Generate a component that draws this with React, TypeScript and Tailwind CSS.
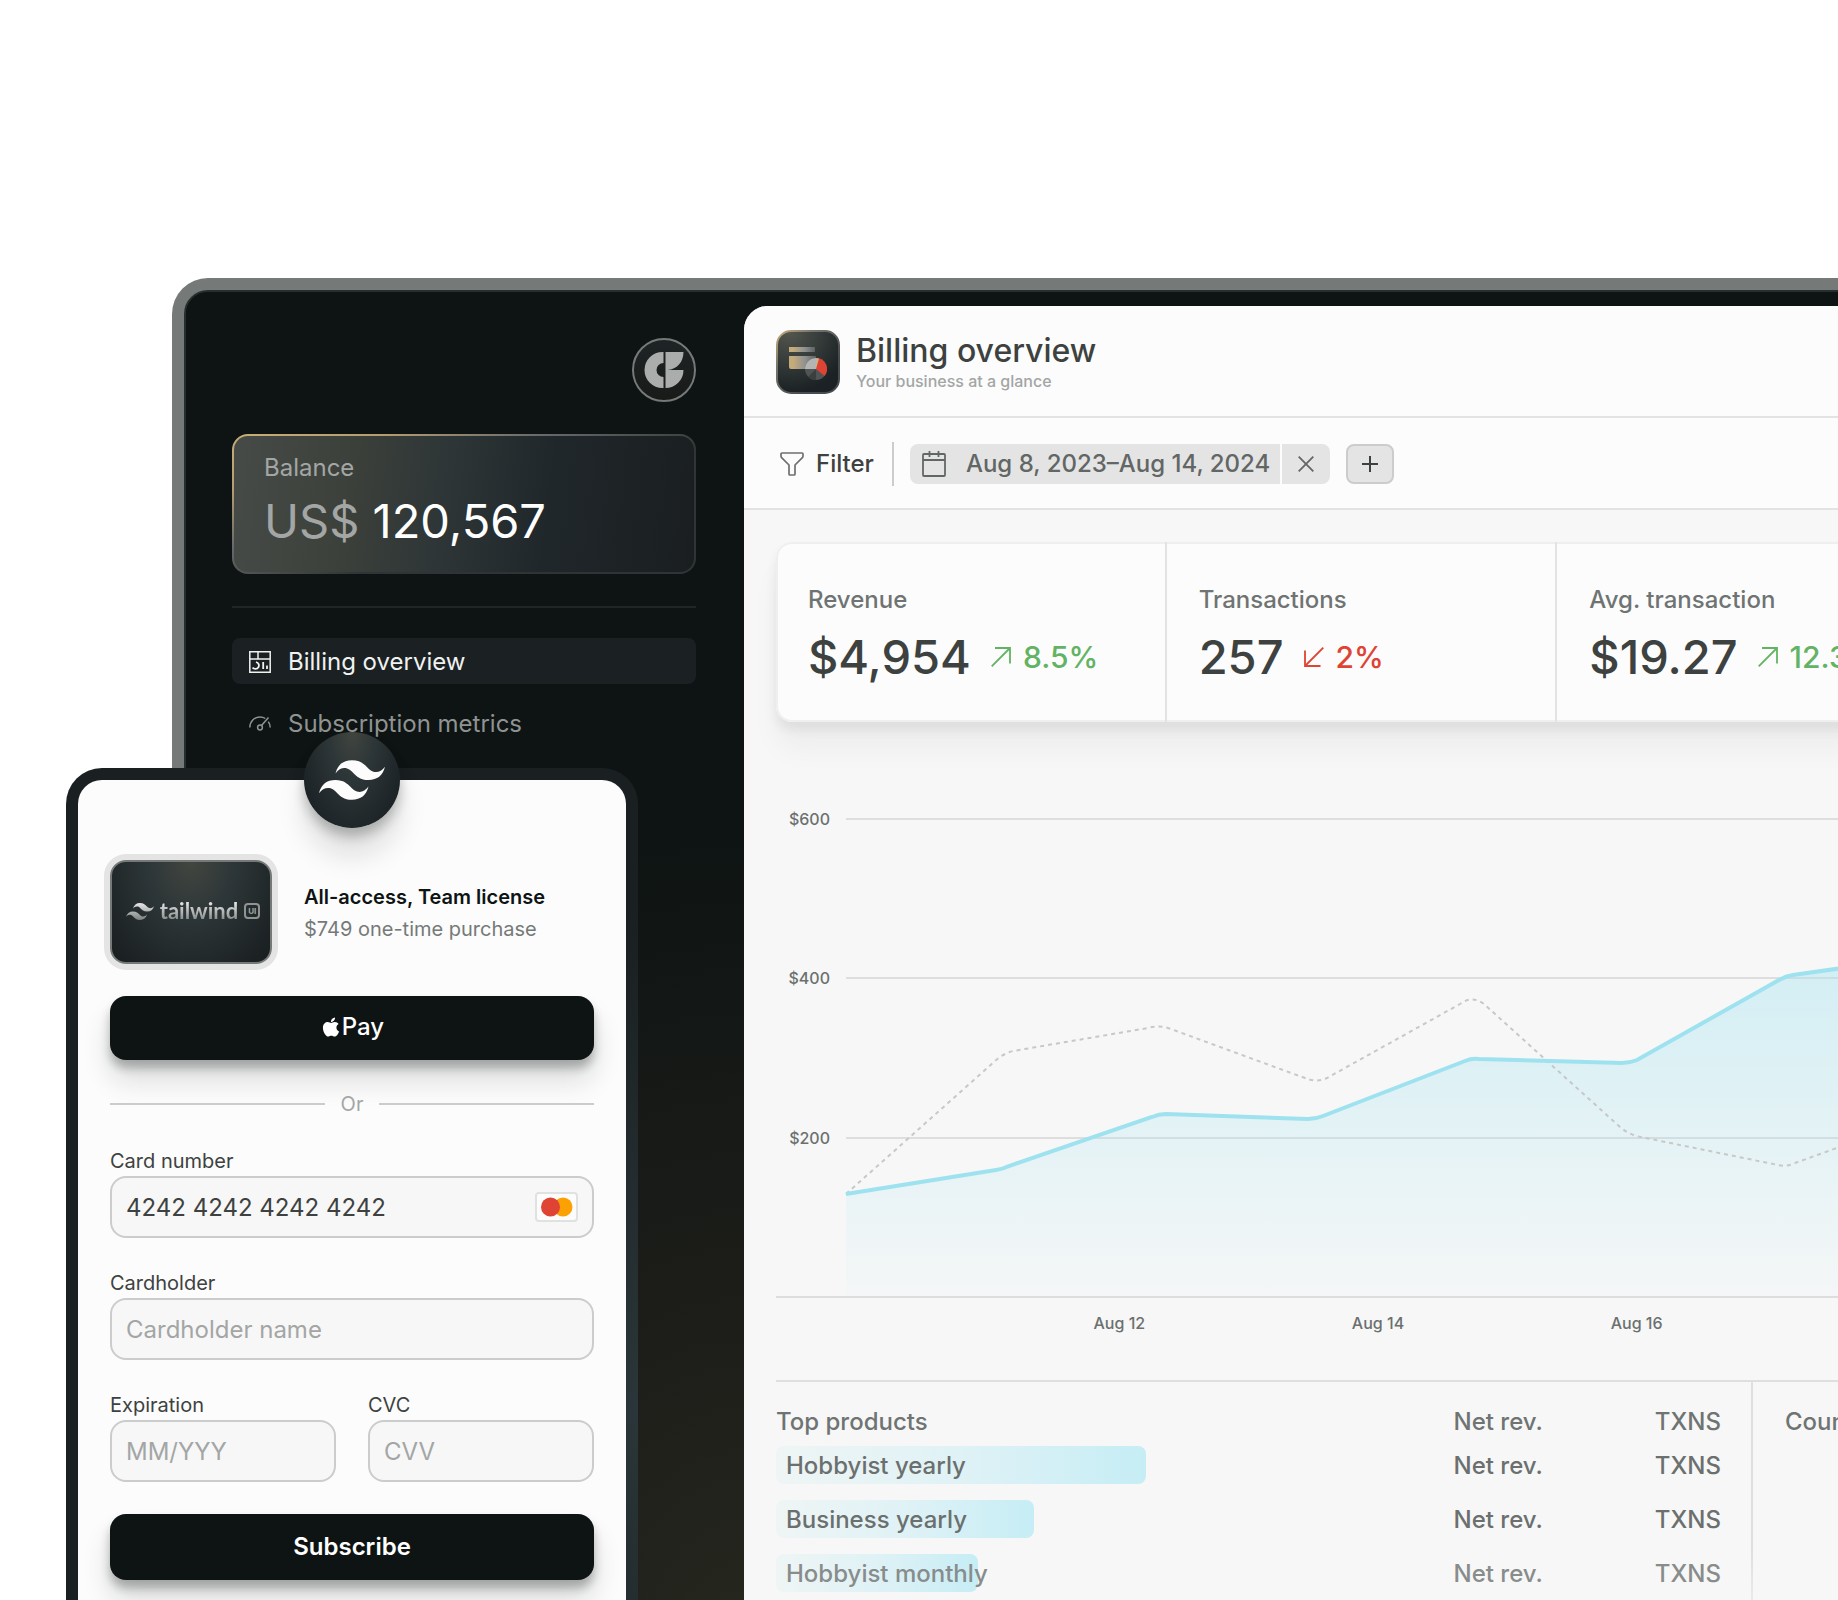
import type { ReactNode } from "react";
import { FaApple } from "react-icons/fa";

function TailwindMark({ className, fill = "#fcfcfc" }: { className: string; fill?: string }) {
  return (
    <svg viewBox="0 4.8 24 14.4" className={className} aria-hidden="true">
      <defs>
        <linearGradient id="mark-fade" x1="0" y1="0" x2="0" y2="1">
          <stop offset="0" stopColor="#e6e6e6" />
          <stop offset="1" stopColor="#7c8180" />
        </linearGradient>
      </defs>
      <path
        fill={fill}
        d="M12.001,4.8c-3.2,0-5.2,1.6-6,4.8c1.2-1.6,2.6-2.2,4.2-1.8c0.913,0.228,1.565,0.89,2.288,1.624C13.666,10.618,15.027,12,18.001,12c3.2,0,5.2-1.6,6-4.8c-1.2,1.6-2.6,2.2-4.2,1.8c-0.913-0.228-1.565-0.89-2.288-1.624C16.337,6.182,14.976,4.8,12.001,4.8z M6.001,12c-3.2,0-5.2,1.6-6,4.8c1.2-1.6,2.6-2.2,4.2-1.8c0.913,0.228,1.565,0.89,2.288,1.624c1.177,1.194,2.538,2.576,5.512,2.576c3.2,0,5.2-1.6,6-4.8c-1.2,1.6-2.6,2.2-4.2,1.8c-0.913-0.228-1.565-0.89-2.288-1.624C10.337,13.382,8.976,12,6.001,12z"
      />
    </svg>
  );
}

function BrandLogo() {
  return (
    <svg viewBox="0 0 64 64" className="size-16" aria-label="Company logo">
      <defs>
        <linearGradient id="brand-bg" x1="0" y1="0" x2="0" y2="1">
          <stop offset="0" stopColor="#1e2426" />
          <stop offset="1" stopColor="#191a18" />
        </linearGradient>
      </defs>
      <circle cx="32" cy="32" r="31" fill="url(#brand-bg)" stroke="#757a79" strokeWidth="2" />
      <g fill="#aaadac">
        <path d="M31.5 14v11a7 7 0 0 0 0 14v11h-1a18 18 0 0 1 0-36z" />
        <path d="M33.5 14h18c0 10-6.500 17.300-16 18h16a18 18 0 0 1-18 18z" />
      </g>
    </svg>
  );
}

function BillingIcon() {
  return (
    <svg viewBox="0 0 24 24" className="size-6 shrink-0" fill="none" stroke="currentColor" strokeWidth="1.5" aria-hidden="true">
      <path d="M1.800 1.800h20.400v20.400H1.800zM1.800 9h20.400M10 1.800V9" />
      <path d="M8 12c2.600.800 3.600 3.200 2.400 5.200-1.300 2.100-4.300 2.200-5.900.500M15.200 12v7M19 15.500V19" strokeWidth="1.800" />
    </svg>
  );
}

function GaugeIcon() {
  return (
    <svg viewBox="0 0 24 24" className="size-6 shrink-0" fill="none" stroke="currentColor" strokeWidth="1.500" aria-hidden="true">
      <path d="M1.800 15.500C1.800 9.500 6.300 5 12 5c2 0 3.800.500 5.300 1.500M20.300 9.600c1.200 1.700 1.900 3.700 1.900 5.900M20.500 5.500l-7 8" />
      <circle cx="12" cy="15.500" r="2.400" />
    </svg>
  );
}

function OverviewIcon() {
  return (
    <svg viewBox="0 0 64 64" className="size-16 shrink-0" aria-hidden="true">
      <defs>
        <radialGradient id="ov-bg" cx="0.200" cy="0" r="1">
          <stop offset="0" stopColor="#55564f" />
          <stop offset="0.500" stopColor="#353c3a" />
          <stop offset="1" stopColor="#1b2124" />
        </radialGradient>
        <linearGradient id="ov-edge" x1="0" y1="0" x2="0.700" y2="0.700">
          <stop offset="0" stopColor="#c9ad78" />
          <stop offset="0.400" stopColor="#77756c" />
          <stop offset="1" stopColor="#474c4c" />
        </linearGradient>
        <linearGradient id="ov-bar" x1="0" y1="0" x2="1" y2="0">
          <stop offset="0.150" stopColor="#c4ab7b" />
          <stop offset="0.600" stopColor="#8f9192" />
          <stop offset="1" stopColor="#5d6161" />
        </linearGradient>
      </defs>
      <rect x="1" y="1" width="62" height="62" rx="14" fill="url(#ov-bg)" stroke="url(#ov-edge)" strokeWidth="2" />
      <rect x="13" y="17" width="26" height="5" fill="url(#ov-bar)" />
      <path d="M13 26h27v13H15a2 2 0 0 1-2-2z" fill="url(#ov-bar)" />
      <circle cx="40" cy="39" r="11" fill="#505454" />
      <path d="M40 39V28a11 11 0 0 0-11 11z" fill="#b4b5b3" />
      <path d="M40 39l-7.800 7.800A11 11 0 0 0 40 50z" fill="#3b403f" />
      <path d="M40 39V28a11 11 0 0 1 8.500 18z" fill="#de4333" />
      <path d="M40 39V28a11 11 0 0 1 3 .400z" fill="#c9b48c" />
    </svg>
  );
}

function FunnelIcon() {
  return (
    <svg viewBox="0 0 24 24" className="size-6" fill="none" stroke="#6b706f" strokeWidth="1.700" strokeLinejoin="round" aria-hidden="true">
      <path d="M2 1h20a1 1 0 0 1 1 1v2c0 .600-.200 1.200-.600 1.600L15 13v9a1 1 0 0 1-1 1h-4a1 1 0 0 1-1-1v-9L1.600 5.600C1.200 5.200 1 4.600 1 4V2a1 1 0 0 1 1-1z" />
    </svg>
  );
}

function CalendarIcon() {
  return (
    <svg viewBox="0 0 24 26" className="h-[26px] w-6" fill="none" stroke="#626665" strokeWidth="1.800" aria-hidden="true">
      <rect x="1" y="3" width="22" height="22" rx="1" />
      <path d="M1 9h22M7.500 0v6M16.500 0v6" />
    </svg>
  );
}

function Trend({ up, children }: { up: boolean; children: ReactNode }) {
  return (
    <span className={up ? "flex items-center gap-3 text-[#62b363]" : "flex items-center gap-3 text-[#de4333]"}>
      <svg viewBox="0 0 20 20" className="size-5 shrink-0" fill="none" stroke="currentColor" strokeWidth="1.800" aria-hidden="true">
        <path d={up ? "M.700 19.300L19 1M4 1h15v15.500" : "M19.300.700L1 19M1 3.500V19h15.500"} />
      </svg>
      <span className="text-[30px] leading-10 font-medium">{children}</span>
    </span>
  );
}

function Stat({ label, value, delta, up = true }: { label: string; value: string; delta: string; up?: boolean }) {
  return (
    <div className="min-w-0 border-r-2 border-[#e2e3e3] px-8 pt-10 pb-[41px] last:border-r-0">
      <div className="text-2xl leading-9 font-medium text-[#6f7473]">{label}</div>
      <div className="mt-[15px] flex items-center gap-5">
        <span className="text-[47px] leading-12 font-medium text-[#3d4240]">{value}</span>
        <Trend up={up}>{delta}</Trend>
      </div>
    </div>
  );
}

function Sidebar() {
  return (
    <aside className="w-[558px] shrink-0 bg-[radial-gradient(ellipse_620px_820px_at_100%_1360px,#26271e_0%,#1c1d19_45%,#0e1413_100%)] pt-[46px] pr-12 pl-[46px]">
      <div className="flex justify-end">
        <BrandLogo />
      </div>
      <div className="mt-8 rounded-2xl bg-[linear-gradient(160deg,#c9ad78_0%,#b59d71_18%,#6a6b6c_36%,#2f3536_60%)] p-0.5">
        <div className="rounded-[14px] bg-[linear-gradient(97deg,#474b48_0%,#3d413b_24%,#2c3436_48%,#20272a_68%,#1a1e20_100%)] px-[30px] pt-3 pb-[18px]">
          <div className="text-2xl leading-10 text-[#a3a6a5]">Balance</div>
          <div className="text-[47px] leading-[66px] text-white">
            <span className="text-[#a3a6a5]">US$</span> 120,567
          </div>
        </div>
      </div>
      <div className="mt-8 h-0.5 bg-[#202626]" />
      <nav className="mt-[30px] flex flex-col gap-4 text-2xl">
        <a href="#billing" className="flex h-[46px] items-center gap-4 rounded-lg bg-[#1b2022] px-4 pt-0.5 text-[#f0f1f1]">
          <BillingIcon />
          Billing overview
        </a>
        <a href="#subscriptions" className="flex h-[46px] items-center gap-4 rounded-lg px-4 pt-0.5 text-[#8f9392]">
          <GaugeIcon />
          Subscription metrics
        </a>
      </nav>
    </aside>
  );
}

function Chart() {
  return (
    <section className="mt-24">
      <div className="flex gap-4 border-b-2 border-[#dcdddd]">
        <div className="-mb-0.5 flex w-[54px] shrink-0 flex-col justify-between text-right text-base font-medium text-[#6b706f]">
          {["$600", "$400", "$200", ""].map((t) => (
            <div key={t} className="flex h-0.5 items-center justify-end">
              {t}
            </div>
          ))}
        </div>
        <svg viewBox="0 0 1102 478" preserveAspectRatio="none" className="h-[478px] min-w-0 flex-1 overflow-visible" fill="none" aria-label="Revenue over time">
          <defs>
            <linearGradient id="area" gradientUnits="userSpaceOnUse" x1="0" y1="150" x2="0" y2="478">
              <stop offset="0" stopColor="#9ee2f0" stopOpacity="0.400" />
              <stop offset="1" stopColor="#9ee2f0" stopOpacity="0.030" />
            </linearGradient>
          </defs>
          <path d="M0 1h1102M0 160h1102M0 320h1102" stroke="#dededf" strokeWidth="2" />
          <path d="M0 376L150 352Q157 351 163 348L306 299Q313 296 320 296L462 301Q470 301 477 298L619 243Q626 240 633 241L776 245Q784 245 791 242L933 162Q940 158 947 157L1102 135V478H0z" fill="url(#area)" />
          <path
            d="M0 376L148 244Q156 236 167 233L302 210Q312 207 322 210L459 260Q470 265 481 260L614 186Q626 177 638 186L774 309Q781 315 790 318L932 347Q941 349 949 345L1102 290"
            stroke="#c7c8c8"
            strokeWidth="2"
            strokeDasharray="4 4"
          />
          <path d="M0 376L150 352Q157 351 163 348L306 299Q313 296 320 296L462 301Q470 301 477 298L619 243Q626 240 633 241L776 245Q784 245 791 242L933 162Q940 158 947 157L1102 135" stroke="#9ee2f0" strokeWidth="4" />
        </svg>
      </div>
      <div className="grid grid-cols-3 pt-[13px] pr-[182px] pl-[214px] text-center text-base leading-6 font-medium text-[#6b706f]">
        <span>Aug 12</span>
        <span>Aug 14</span>
        <span>Aug 16</span>
      </div>
    </section>
  );
}

const products = [
  { name: "Hobbyist yearly", share: 370, tone: "text-[#6b706f]" },
  { name: "Business yearly", share: 258, tone: "text-[#6b706f]" },
  { name: "Hobbyist monthly", share: 202, tone: "text-[#888c8b]" },
];

function Products() {
  return (
    <section className="mt-[45px] flex border-t-2 border-[#dedfdf] text-2xl font-medium text-[#6f7473]">
      <div className="min-w-0 flex-[5]">
        <div className="pt-6 pr-[30px]">
          <table className="w-full">
            <thead>
              <tr className="text-left">
                <th className="h-10 w-full pb-2 leading-8 font-medium">Top products</th>
                <th className="pb-2 text-right leading-8 font-medium whitespace-nowrap">Net rev.</th>
                <th className="pb-2 pl-28 text-right leading-8 font-medium">TXNS</th>
              </tr>
            </thead>
            <tbody>
              {products.map((p) => (
                <tr key={p.name} className={p.tone}>
                  <td className="pb-4">
                    <div
                      className="h-[38px] rounded-lg bg-linear-to-r from-[#eff5f5] via-[#dff2f6] to-[#c6edf5] pl-2.5 leading-10 whitespace-nowrap"
                      style={{ width: p.share }}
                    >
                      {p.name}
                    </div>
                  </td>
                  <td className="pb-3.5 text-right leading-10 whitespace-nowrap">Net rev.</td>
                  <td className="pb-3.5 text-right leading-10">TXNS</td>
                </tr>
              ))}
            </tbody>
          </table>
        </div>
      </div>
      <div className="w-0.5 bg-linear-to-b from-[#dedfdf] from-75% to-[#ececec]" />
      <div className="min-w-0 flex-1">
        <div className="pt-6 pl-8 leading-8">Countries</div>
      </div>
    </section>
  );
}

function Dashboard() {
  return (
    <div className="-mr-[144px] ml-[172px] rounded-tl-[36px] bg-[#757a79] pt-3 pl-3">
      <div className="flex min-h-screen overflow-hidden rounded-tl-3xl border-2 border-[#262f30] bg-[#0e1413]">
        <Sidebar />
        <main className="mt-[14px] min-w-0 flex-1 rounded-tl-3xl bg-[#f7f7f7]">
          <header className="flex items-center gap-4 rounded-tl-3xl border-b-2 border-[#e2e3e3] bg-[#fcfcfc] px-8 pt-6 pb-[22px]">
            <OverviewIcon />
            <div>
              <h1 className="text-[32px] leading-[38px] font-medium text-[#3d4240]">Billing overview</h1>
              <p className="text-base leading-[22px] font-medium text-[#a3a6a5]">Your business at a glance</p>
            </div>
          </header>
          <div className="flex items-center gap-4 border-b-2 border-[#e2e3e3] bg-[#fcfcfc] pt-6 pr-8 pb-[22px] pl-9 text-2xl font-medium">
            <button className="flex items-center gap-3 pr-0.5 text-[#3d4240]">
              <FunnelIcon />
              Filter
            </button>
            <div className="h-11 w-0.5 bg-[#cbcccc]" />
            <div className="flex h-10 overflow-hidden rounded-lg text-[#626665]">
              <button className="flex items-center gap-5 bg-[#e4e4e4] pr-2.5 pl-3">
                <CalendarIcon />
                Aug 8, 2023–Aug 14, 2024
              </button>
              <button aria-label="Clear dates" className="ml-0.5 flex w-12 items-center justify-center bg-[#e4e4e4]">
                <svg viewBox="0 0 16 16" className="size-4" stroke="currentColor" strokeWidth="1.800" aria-hidden="true">
                  <path d="M.700.700l14.600 14.600M15.300.700L.700 15.300" />
                </svg>
              </button>
            </div>
            <button aria-label="Add filter" className="flex h-10 w-12 items-center justify-center rounded-lg border-2 border-[#cbcccc] bg-[#e4e4e4]">
              <svg viewBox="0 0 16 16" className="size-4" stroke="#3d4240" strokeWidth="2" aria-hidden="true">
                <path d="M8 0v16M0 8h16" />
              </svg>
            </button>
          </div>
          <div className="p-8">
            <section className="grid grid-cols-3 rounded-2xl bg-[#fcfcfc] shadow-[inset_0_0_0_2px_#efefef,0_8px_12px_rgba(14,20,19,0.07),0_28px_28px_rgba(14,20,19,0.04)]">
              <Stat label="Revenue" value="$4,954" delta="8.5%" />
              <Stat label="Transactions" value="257" delta="2%" up={false} />
              <Stat label="Avg. transaction" value="$19.27" delta="12.3%" />
            </section>
            <Chart />
            <Products />
          </div>
        </main>
      </div>
    </div>
  );
}

function Field({ id, label, value, placeholder, badge }: { id: string; label: string; value?: string; placeholder?: string; badge?: ReactNode }) {
  return (
    <div className="min-w-0 flex-1">
      <label htmlFor={id} className="mb-0.5 block text-xl leading-[26px] text-[#3d4240]">
        {label}
      </label>
      <div className="flex h-[62px] items-center rounded-2xl border-2 border-[#cbcccc] bg-[#f7f7f7] px-[14px]">
        <input
          id={id}
          defaultValue={value}
          placeholder={placeholder}
          className="h-full w-full min-w-0 bg-transparent text-2xl text-[#3d4240] outline-none placeholder:text-[#a3a6a5]"
        />
        {badge}
      </div>
    </div>
  );
}

function MastercardBadge() {
  return (
    <svg viewBox="0 0 44 30" className="h-[30px] w-11 shrink-0" aria-label="Mastercard">
      <rect x="2" y="1" width="41" height="28" rx="3" fill="#fcfcfc" stroke="#e0e1e1" strokeWidth="2" />
      <circle cx="29" cy="15" r="9.500" fill="#fca103" />
      <circle cx="16.500" cy="15" r="9.500" fill="#de4333" />
    </svg>
  );
}

const buttonClass =
  "flex w-full items-center justify-center rounded-2xl bg-[#0e1413] text-2xl text-white shadow-[0_8px_10px_rgba(14,20,19,0.28),0_20px_28px_rgba(14,20,19,0.14)]";

function Checkout() {
  return (
    <div className="absolute top-[768px] left-[66px] w-[572px] rounded-[36px] bg-[radial-gradient(ellipse_160px_500px_at_100%_640px,#2a3639_0%,#1a1f21_100%)] p-3">
      <div className="absolute -top-9 left-1/2 flex size-24 -translate-x-1/2 items-center justify-center rounded-full bg-[radial-gradient(ellipse_at_50%_0%,#41453f_0%,#2c3537_35%,#1b2124_85%)] shadow-[0_8px_12px_rgba(14,20,19,0.26),0_28px_28px_rgba(14,20,19,0.12)]">
        <TailwindMark className="h-10 w-[66px]" />
      </div>
      <form className="flex flex-col gap-8 rounded-3xl bg-[#fcfcfc] px-8 pt-20 pb-16" onSubmit={(e) => e.preventDefault()}>
        <div className="flex items-center gap-8">
          <div className="flex h-[104px] w-[162px] shrink-0 items-center justify-center gap-1.5 rounded-2xl border-2 border-[#757a79] bg-[radial-gradient(ellipse_at_50%_0%,#434640_0%,#2c3537_40%,#1a1f21_95%)] pb-0.5 pl-1 ring-6 ring-[#e4e4e4]">
            <TailwindMark className="h-[17px] w-7 shrink-0" fill="url(#mark-fade)" />
            <span className="bg-linear-to-b from-[#e6e6e6] from-20% to-[#7c8180] to-90% bg-clip-text font-['Lato'] text-[22px] leading-7 font-bold text-transparent">tailwind</span>
            <span className="flex size-4 shrink-0 items-center justify-center rounded border-2 border-[#8f9392] text-[8px] leading-none font-bold text-[#a3a6a5]">UI</span>
          </div>
          <div className="pt-0.5 text-xl leading-8">
            <div className="font-semibold text-[#0e1413]">All-access, Team license</div>
            <div className="text-[#757a79]">$749 one-time purchase</div>
          </div>
        </div>
        <button type="button" className={buttonClass + " h-16 pb-0.5 font-medium"}>
          <FaApple className="size-[22px]" aria-hidden="true" />
          Pay
        </button>
        <div className="flex items-center gap-4 text-xl leading-6 text-[#a3a6a5]">
          <div className="h-0.5 flex-1 bg-[#cbcccc]" />
          Or
          <div className="h-0.5 flex-1 bg-[#cbcccc]" />
        </div>
        <Field id="card-number" label="Card number" value="4242 4242 4242 4242" badge={<MastercardBadge />} />
        <Field id="cardholder" label="Cardholder" placeholder="Cardholder name" />
        <div className="flex gap-8">
          <Field id="expiration" label="Expiration" placeholder="MM/YYY" />
          <Field id="cvc" label="CVC" placeholder="CVV" />
        </div>
        <button type="submit" className={buttonClass + " h-[66px] font-semibold"}>
          Subscribe
        </button>
      </form>
    </div>
  );
}

export default function App() {
  return (
    <div className="relative h-screen overflow-hidden bg-white pt-[278px] font-['Inter',sans-serif]">
      <Dashboard />
      <Checkout />
    </div>
  );
}
